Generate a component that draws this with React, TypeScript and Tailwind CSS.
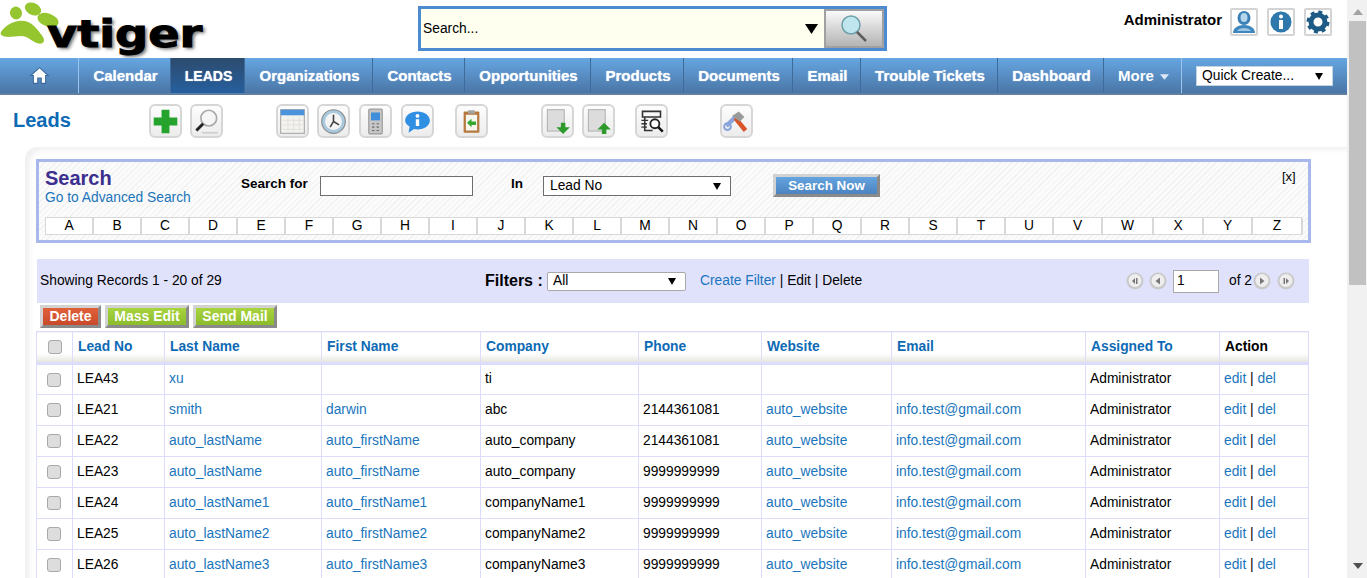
import type { ReactNode } from "react";

const NAV = [
  { label: "Calendar", w: "w-[92px]" },
  { label: "LEADS", w: "w-[74px]", active: true },
  { label: "Organizations", w: "w-[128px]" },
  { label: "Contacts", w: "w-[92px]" },
  { label: "Opportunities", w: "w-[126px]" },
  { label: "Products", w: "w-[93px]" },
  { label: "Documents", w: "w-[109px]" },
  { label: "Email", w: "w-[68px]" },
  { label: "Trouble Tickets", w: "w-[137px]" },
  { label: "Dashboard", w: "w-[106px]" },
];

const ROWS = [
  ["LEA43", "xu", "", "ti", "", "", ""],
  ["LEA21", "smith", "darwin", "abc", "2144361081", "auto_website", "info.test@gmail.com"],
  ["LEA22", "auto_lastName", "auto_firstName", "auto_company", "2144361081", "auto_website", "info.test@gmail.com"],
  ["LEA23", "auto_lastName", "auto_firstName", "auto_company", "9999999999", "auto_website", "info.test@gmail.com"],
  ["LEA24", "auto_lastName1", "auto_firstName1", "companyName1", "9999999999", "auto_website", "info.test@gmail.com"],
  ["LEA25", "auto_lastName2", "auto_firstName2", "companyName2", "9999999999", "auto_website", "info.test@gmail.com"],
  ["LEA26", "auto_lastName3", "auto_firstName3", "companyName3", "9999999999", "auto_website", "info.test@gmail.com"],
];

const HEADERS = ["Lead No", "Last Name", "First Name", "Company", "Phone", "Website", "Email", "Assigned To"];
const LETTERS = "ABCDEFGHIJKLMNOPQRSTUVWXYZ".split("");

function Tile({ children, className = "" }: { children: ReactNode; className?: string }) {
  return (
    <div className={`flex h-[34px] w-[33px] shrink-0 items-center justify-center rounded-[6px] border-2 border-[#d6d6d6] bg-gradient-to-b from-[#fdfdfd] to-[#ececec] ${className}`}>
      <svg viewBox="0 0 24 24" className="h-[27px] w-[27px]">{children}</svg>
    </div>
  );
}

function Arrow({ className = "h-[7px] w-[8px]" }: { className?: string }) {
  return (
    <svg viewBox="0 0 10 8" preserveAspectRatio="none" className={className}>
      <path d="M0 0h10L5 8z" fill="#000" />
    </svg>
  );
}

function UserIcon({ children }: { children: ReactNode }) {
  return (
    <div className="flex h-[28px] w-[28px] items-center justify-center rounded-[2px] border-2 border-[#d4d4d4] bg-white">
      <svg viewBox="0 0 24 24" className="h-[24px] w-[24px]">{children}</svg>
    </div>
  );
}

function PageButton({ d }: { d: string }) {
  return (
    <svg viewBox="0 0 18 18" className="h-[18px] w-[18px] shrink-0">
      <circle cx="9" cy="9" r="8.5" fill="#c9c9c9" />
      <circle cx="9" cy="8.5" r="6.5" fill="#eeeeee" />
      <path d={d} fill="#777" />
    </svg>
  );
}

function Btn3d({ label, className }: { label: string; className: string }) {
  return (
    <button className={`h-[23px] border-[3px] border-t-[#d2d2d2] border-r-[#8a8a8a] border-b-[#8a8a8a] border-l-[#d2d2d2] leading-none font-bold text-white ${className}`}>
      {label}
    </button>
  );
}

function Checkbox({ className = "" }: { className?: string }) {
  return <div className={`h-[14px] w-[14px] rounded-[3px] border border-[#a9a9a9] bg-[#dddddd] ${className}`} />;
}

export default function App() {
  return (
    <div className="flex h-[578px] w-[1367px] overflow-hidden bg-white font-['Liberation_Sans',Arial,sans-serif] text-[13.8px] text-black">
      <div className="w-[1347px] shrink-0">
        {/* top header */}
        <div className="flex h-[58px]">
          <div className="flex w-[418px] shrink-0 items-start overflow-hidden">
            <svg viewBox="0 0 62 50" className="mt-[1px] h-[50px] w-[62px] shrink-0">
              <ellipse cx="16" cy="12" rx="6" ry="6.500" fill="#95c52f" transform="rotate(-20 16 12)" />
              <ellipse cx="33" cy="8" rx="8.500" ry="6" fill="#95c52f" transform="rotate(25 33 8)" />
              <ellipse cx="48" cy="19" rx="11" ry="6.500" fill="#95c52f" transform="rotate(20 48 19)" />
              <path d="M1 31C6 23 18 17 28 21c7 3 12 11 15 15 3 5-1 8-6 6-6-2-9-7-16-7-7 0-14 2-18 0-2-1-3-2-2-4z" fill="#95c52f" />
            </svg>
            <span className="mt-[12px] -ml-[15px] origin-left scale-x-[1.25] font-['DejaVu_Sans',sans-serif] text-[37px] leading-[46px] font-bold [-webkit-text-stroke:1px_#000] [text-shadow:2px_2px_3px_#777]">
              vtiger
            </span>
          </div>
          <div className="mt-[6px] flex h-[45px] w-[469px] shrink-0 border-[3px] border-[#4c8bcf] bg-[#fffff0]">
            <div className="flex flex-1 items-center justify-between pr-[6px] pl-[2px]">
              <span className="mt-[2px]">Search...</span>
              <Arrow className="h-[10px] w-[13px]" />
            </div>
            <div className="flex w-[60px] items-center justify-center border-2 border-[#a0a0a0] bg-gradient-to-b from-[#fafafa] to-[#b4b4b4]">
              <svg viewBox="0 0 28 30" className="h-[30px] w-[28px]">
                <circle cx="11" cy="11" r="9" fill="#bfe6ee" stroke="#6f9fa8" strokeWidth="1.5" />
                <path d="M17 18l9 9" stroke="#5c5c5c" strokeWidth="2.5" />
              </svg>
            </div>
          </div>
          <div className="flex flex-1 items-start justify-end pt-[8px] pr-[15px]">
            <span className="mt-[3px] mr-[8px] text-[15px] leading-[18px] font-bold">Administrator</span>
            <UserIcon>
              <ellipse cx="12" cy="8" rx="6.500" ry="7" fill="#3a7fb5" />
              <path d="M1 23c0-5 5-8 11-8s11 3 11 8z" fill="#3f86bd" />
              <ellipse cx="12" cy="7.500" rx="3.500" ry="4.500" fill="#b5d6ec" />
              <path d="M5 21c1-2 4-3 7-3s6 1 7 3z" fill="#9cc6e4" />
            </UserIcon>
            <div className="w-[9px]" />
            <UserIcon>
              <circle cx="12" cy="12" r="10.500" fill="#2f78ab" />
              <circle cx="12" cy="6.500" r="2" fill="#fff" />
              <rect x="10" y="10" width="4" height="9" fill="#fff" />
            </UserIcon>
            <div className="w-[9px]" />
            <UserIcon>
              <circle cx="12" cy="12" r="7" fill="none" stroke="#1d5a86" strokeWidth="5" />
              <circle cx="12" cy="12" r="10" fill="none" stroke="#1d5a86" strokeWidth="3" strokeDasharray="4 3.850" />
            </UserIcon>
          </div>
        </div>

        {/* main nav */}
        <div className="flex h-[37px] items-stretch border-b-2 border-[#5f80a3] bg-gradient-to-b from-[#66a6e2] to-[#4a76a6] text-[15px] font-bold text-white">
          <div className="flex w-[79px] items-center justify-center border-r border-[#9cc4ea]">
            <svg viewBox="0 0 24 24" className="h-[21px] w-[21px]">
              <path d="M12 3L2 12h3v9h5v-6h4v6h5v-9h3z" fill="#fff" stroke="#3a6a9b" strokeWidth="1.2" />
            </svg>
          </div>
          {NAV.map((n) => (
            <div
              key={n.label}
              className={`flex items-center justify-center border-r border-[#3f6b9a] pt-[2px] pl-[2px] [text-shadow:0_0_1px_#dfefff] ${n.w} ${n.active ? "bg-gradient-to-b from-[#2c4b6d] to-[#255f9f] text-[14px]" : ""}`}
            >
              {n.label}
            </div>
          ))}
          <div className="flex w-[78px] items-center justify-center gap-[6px] border-r border-[#9cc4ea] pt-[2px] pl-[2px]">
            More
            <svg viewBox="0 0 10 6" className="h-[6px] w-[9px]"><path d="M0 0h10L5 6z" fill="#dce9f6" /></svg>
          </div>
          <div className="ml-[14px] flex h-[20px] w-[137px] translate-y-[8px] items-center justify-between border border-[#c4d3e2] bg-white pr-[9px] pl-[5px] text-[13.8px] font-normal text-black">
            Quick Create...
            <Arrow />
          </div>
        </div>

        {/* module toolbar */}
        <div className="flex h-[52px] items-start pt-[9px]">
          <div className="w-[149px] pt-[5px] pl-[13px] text-[20px] leading-[23px] font-bold text-[#0d6ab5]">Leads</div>
          <Tile>
            <path d="M8.500 1.500h7v7h7v7h-7v7h-7v-7h-7v-7h7z" fill="#25a32c" />
          </Tile>
          <Tile className="ml-[8px]">
            <circle cx="14" cy="9" r="7" fill="#f6f6f6" stroke="#a8a8a8" strokeWidth="1.5" />
            <path d="M9 14l-6 6" stroke="#222" strokeWidth="2.6" />
            <path d="M8 22h14" stroke="#cfcfcf" strokeWidth="1.5" />
          </Tile>
          <Tile className="ml-[53px]">
            <rect x="1.500" y="1.500" width="21" height="21" fill="#f4f3ee" stroke="#a9a9a9" />
            <rect x="1.500" y="1.500" width="21" height="5" fill="#4d93dc" />
            <path d="M3 11h18M3 15h18M3 19h18M8 8v13M13 8v13M18 8v13" stroke="#dddddd" strokeWidth=".7" />
          </Tile>
          <Tile className="ml-[8px]">
            <circle cx="12" cy="12" r="10.500" fill="#a8c9de" stroke="#8c8c8c" />
            <circle cx="12" cy="12" r="7.500" fill="#f4f4f4" />
            <path d="M12 6v6l-3 5M12 12l5 3" stroke="#444" strokeWidth="1.4" fill="none" />
          </Tile>
          <Tile className="ml-[9px]">
            <rect x="6" y="1" width="12" height="22" rx="1" fill="#c6c6c6" stroke="#9a9a9a" />
            <rect x="8" y="4" width="8" height="7" fill="#3f8edc" />
            <path d="M9 14h2M13 14h2M9 17h2M13 17h2M9 20h2M13 20h2" stroke="#666" />
          </Tile>
          <Tile className="ml-[9px]">
            <path d="M12 3c6 0 11 3.500 11 8s-5 8-11 8c-1 0-2 0-3-.3L4 22l1-5.500C2.500 15 1 13 1 11c0-4.500 5-8 11-8z" fill="#2e8fe3" />
            <circle cx="12" cy="7" r="1.700" fill="#fff" />
            <rect x="10.500" y="10" width="3" height="6" fill="#fff" />
          </Tile>
          <Tile className="ml-[21px]">
            <rect x="5" y="3" width="14" height="19" rx="1" fill="#b5793f" />
            <rect x="7" y="6" width="10" height="14" fill="#f6f6ee" />
            <rect x="9" y="2" width="6" height="3" fill="#a5a5a5" />
            <path d="M8 13l4-3.500V12h4v3h-4v2z" fill="#36a72f" />
          </Tile>
          <Tile className="ml-[53px]">
            <rect x="3" y="1.500" width="15" height="19" fill="#dcdcdc" stroke="#b4b4b4" />
            <path d="M15 13h4v4h4l-6 6-6-6h4z" fill="#2f9a2c" />
          </Tile>
          <Tile className="ml-[8px]">
            <rect x="3" y="1.500" width="15" height="19" fill="#dcdcdc" stroke="#b4b4b4" />
            <path d="M17 13l6 6h-4v4h-4v-4h-4z" fill="#2f9a2c" />
          </Tile>
          <Tile className="ml-[20px] rounded-[3px] border-[#bdbdbd]">
            <path d="M4 3h16v5H4zM6 8v12h7" fill="none" stroke="#333" strokeWidth="1.400" />
            <path d="M3 11h6M3 14h5M3 17h5" stroke="#333" strokeWidth="1.200" />
            <circle cx="15" cy="14" r="4" fill="#fff" stroke="#222" strokeWidth="1.600" />
            <path d="M18 17l4 4" stroke="#111" strokeWidth="2.200" />
          </Tile>
          <Tile className="ml-[52px]">
            <path d="M3 16l8-8" stroke="#8aa4dc" strokeWidth="4" />
            <circle cx="4" cy="16.500" r="3" fill="none" stroke="#8aa4dc" strokeWidth="1.800" />
            <path d="M11 9l9 11" stroke="#d9552a" strokeWidth="4" />
            <path d="M8 7l6-4 5 5-4 4z" fill="#9a9a9a" />
          </Tile>
        </div>

        {/* content card */}
        <div className="ml-[25px] h-[431px] overflow-hidden rounded-tl-xl pt-[12px] pl-[11px] shadow-[inset_7px_5px_5px_-2px_#f1f1f1]">
          {/* search panel */}
          <div className="h-[84px] w-[1275px] border-[3px] border-[#a8b8ec] bg-[repeating-linear-gradient(135deg,#f1f1f1_0,#f1f1f1_1px,#fbfbfb_1px,#fbfbfb_4px)] pl-[6px]">
            <div className="flex h-[55px] items-start">
              <div className="w-[196px] pt-[5px]">
                <div className="text-[20px] leading-[23px] font-bold text-[#3c2f8f]">Search</div>
                <a className="block leading-[15px] text-[#1a75bc]">Go to Advanced Search</a>
              </div>
              <span className="mt-[14px] w-[79px] text-[13.5px] leading-[15px] font-bold">Search for</span>
              <div className="mt-[14px] h-[20px] w-[153px] border border-[#6e6e6e] bg-white" />
              <span className="mt-[14px] ml-[38px] w-[32px] text-[13.5px] leading-[15px] font-bold">In</span>
              <div className="mt-[14px] flex h-[20px] w-[188px] items-center justify-between border border-[#6e6e6e] bg-white pr-[9px] pl-[6px]">
                Lead No
                <Arrow />
              </div>
              <Btn3d label="Search Now" className="mt-[12px] ml-[42px] w-[107px] bg-gradient-to-b from-[#64a4e0] to-[#4c84c0] text-[13.4px]" />
              <span className="mt-[7px] ml-[402px] text-[13px] leading-[15px]">[x]</span>
            </div>
            <div className="grid h-[18px] w-[1257px] grid-cols-[repeat(21,48px)_49px_51px_50px_49px_50px] border-y border-l border-[#d8d8d8] bg-white">
              {LETTERS.map((l) => (
                <div key={l} className="flex items-center justify-center border-r-2 border-[#d8d8d8] leading-none">{l}</div>
              ))}
            </div>
          </div>

          {/* records bar */}
          <div className="mt-[16px] ml-[1px] flex h-[44px] w-[1272px] items-center bg-[#e0e2fc] pl-[3px]">
            <span className="w-[445px]">Showing Records 1 - 20 of 29</span>
            <span className="w-[62px] text-[16px] font-bold">Filters :</span>
            <div className="flex h-[19px] w-[139px] items-center justify-between rounded-[2px] border border-[#a9a9a9] bg-white pr-[9px] pl-[5px]">
              All
              <Arrow />
            </div>
            <span className="ml-[14px] w-[426px]"><a className="text-[#1a75bc]">Create Filter</a> | Edit | Delete</span>
            <PageButton d="M6 9l3-3v6zM10 6h1.500v6H10z" />
            <div className="w-[5px]" />
            <PageButton d="M11 5.500v7L6.500 9z" />
            <div className="ml-[6px] flex h-[23px] w-[46px] items-center border border-[#a9a9a9] bg-white pl-[3px]">1</div>
            <span className="ml-[10px] w-[24px]">of 2</span>
            <PageButton d="M7 5.500v7L11.500 9z" />
            <div className="w-[6px]" />
            <PageButton d="M6.500 6H8v6H6.500zM9 6l3 3-3 3z" />
          </div>

          {/* mass actions */}
          <div className="mt-[2px] ml-[1px] flex h-[23px] gap-[4px] pl-[3px]">
            <Btn3d label="Delete" className="w-[61px] bg-gradient-to-b from-[#e0603a] to-[#c94a2a] pb-[2px] text-[14px]" />
            <Btn3d label="Mass Edit" className="w-[84px] bg-gradient-to-b from-[#a8d43e] to-[#8cbc2c] pb-[2px] text-[14px]" />
            <Btn3d label="Send Mail" className="w-[84px] bg-gradient-to-b from-[#a8d43e] to-[#8cbc2c] pb-[2px] text-[14px]" />
          </div>

          {/* list */}
          <table className="mt-[3px] w-[1272px] table-fixed border-collapse">
            <colgroup>
              <col className="w-[36px]" />
              <col className="w-[92px]" />
              <col className="w-[157px]" />
              <col className="w-[159px]" />
              <col className="w-[158px]" />
              <col className="w-[123px]" />
              <col className="w-[130px]" />
              <col className="w-[194px]" />
              <col className="w-[134px]" />
              <col className="w-[89px]" />
            </colgroup>
            <thead>
              <tr className="h-[32px]">
                <th className="border-x border-t border-b-[3px] border-[#dcdcfc] bg-gradient-to-b from-white from-70% to-[#e4e4de]">
                  <Checkbox className="ml-[11px]" />
                </th>
                {HEADERS.map((h) => (
                  <th key={h} className="border-x border-t border-b-[3px] border-[#dcdcfc] bg-gradient-to-b from-white from-70% to-[#e4e4de] pl-[5px] text-left font-bold text-[#0d6ab5]">
                    {h}
                  </th>
                ))}
                <th className="border-x border-t border-b-[3px] border-[#dcdcfc] bg-gradient-to-b from-white from-70% to-[#e4e4de] pl-[5px] text-left font-bold">Action</th>
              </tr>
            </thead>
            <tbody>
              {ROWS.map((r) => (
                <tr key={r[0]} className="h-[31px]">
                  <td className="border border-[#dcdcfc]"><Checkbox className="ml-[10px]" /></td>
                  <td className="border border-[#dcdcfc] pl-[4px]">{r[0]}</td>
                  <td className="border border-[#dcdcfc] pl-[4px] text-[#1a75bc]">{r[1]}</td>
                  <td className="border border-[#dcdcfc] pl-[4px] text-[#1a75bc]">{r[2]}</td>
                  <td className="border border-[#dcdcfc] pl-[4px]">{r[3]}</td>
                  <td className="border border-[#dcdcfc] pl-[4px]">{r[4]}</td>
                  <td className="border border-[#dcdcfc] pl-[4px] text-[#1a75bc]">{r[5]}</td>
                  <td className="border border-[#dcdcfc] pl-[4px] text-[#1a75bc]">{r[6]}</td>
                  <td className="border border-[#dcdcfc] pl-[4px]">Administrator</td>
                  <td className="border border-[#dcdcfc] pl-[4px]"><a className="text-[#1a75bc]">edit</a> | <a className="text-[#1a75bc]">del</a></td>
                </tr>
              ))}
            </tbody>
          </table>
        </div>
      </div>

      {/* page scrollbar */}
      <div className="flex h-[578px] w-[20px] shrink-0 flex-col items-center bg-[#f1f1f1] pl-[1px]">
        <svg viewBox="0 0 10 6" className="mt-[9px] h-[6px] w-[10px] shrink-0"><path d="M5 0l5 6H0z" fill="#a3a3a3" /></svg>
        <div className="mt-[6px] h-[264px] w-[17px] shrink-0 bg-[#c1c1c1]" />
        <svg viewBox="0 0 10 6" className="mt-[278px] h-[6px] w-[10px] shrink-0"><path d="M0 0h10L5 6z" fill="#505050" /></svg>
      </div>
    </div>
  );
}
